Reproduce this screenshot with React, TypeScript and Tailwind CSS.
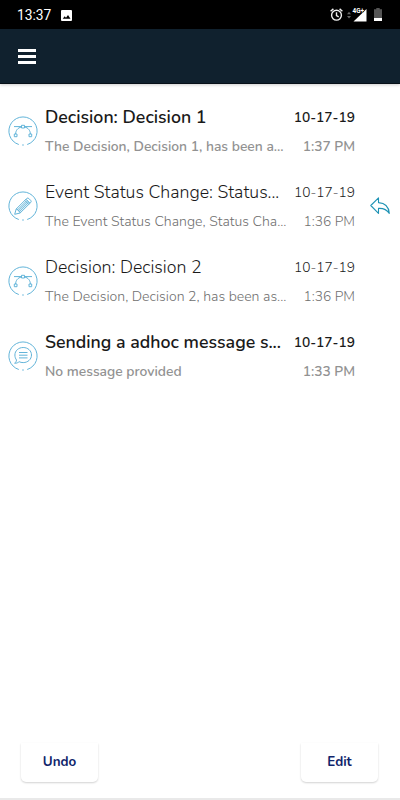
import React from "react";
import clsx from "clsx";

type IconKind = "decision" | "status" | "message";

type Notification = {
  id: number;
  kind: IconKind;
  title: string;
  body: string;
  date: string;
  time: string;
  unread: boolean;
  reply?: boolean;
};

const notifications: Notification[] = [
  {
    id: 1,
    kind: "decision",
    title: "Decision: Decision 1",
    body: "The Decision, Decision 1, has been a...",
    date: "10-17-19",
    time: "1:37 PM",
    unread: true,
  },
  {
    id: 2,
    kind: "status",
    title: "Event Status Change: Status...",
    body: "The Event Status Change, Status Cha...",
    date: "10-17-19",
    time: "1:36 PM",
    unread: false,
    reply: true,
  },
  {
    id: 3,
    kind: "decision",
    title: "Decision: Decision 2",
    body: "The Decision, Decision 2, has been as...",
    date: "10-17-19",
    time: "1:36 PM",
    unread: false,
  },
  {
    id: 4,
    kind: "message",
    title: "Sending a adhoc message s...",
    body: "No message provided",
    date: "10-17-19",
    time: "1:33 PM",
    unread: true,
  },
];

function StatusBar() {
  return (
    <div className="flex h-[29px] items-center bg-black pl-[17px] pr-[18px] text-white">
      <span className="pt-px font-['Roboto',sans-serif] text-[13.8px] leading-[28px]">
        13:37
      </span>
      <svg
        className="ml-[10px] mt-px"
        width="11"
        height="11"
        viewBox="0 0 11 11"
      >
        <rect width="11" height="11" rx="1" fill="#fff" />
        <path d="M1.7 8.8l2-2.5 1.3 1.5 2-2.7 2.5 3.7z" fill="#000" />
      </svg>
      <div className="ml-auto flex items-center">
        {/* Alarm */}
        <svg
          width="13"
          height="13"
          viewBox="0 0 13 13"
          fill="none"
          stroke="#f0f0f0"
          strokeWidth="1.4"
        >
          <circle cx="6.5" cy="7.2" r="4.9" />
          <path d="M6.5 4.2v3.3l2.2 1.3M.6 3.2L3.4.9M12.4 3.2L9.6.9" />
        </svg>
        {/* Mobile data */}
        <svg className="ml-[4px]" width="20" height="14" viewBox="0 0 20 14">
          <path d="M0 6.2l2-2.4 2 2.4zM0 8l2 2.4L4 8z" fill="#666" />
          <path d="M19.500 1v12.500H6.500z" fill="#fff" />
          <text
            x="5.6"
            y="5.4"
            fill="#fff"
            stroke="#000"
            strokeWidth="0.8"
            paintOrder="stroke"
            fontSize="6.4"
            fontWeight="700"
            fontFamily="Roboto, sans-serif"
          >
            4G+
          </text>
        </svg>
        {/* Battery */}
        <svg className="ml-[7px]" width="8" height="13" viewBox="0 0 8 13">
          <path d="M2.3 0h3.4v1.3H8V10H0V1.3h2.3z" fill="#555" />
          <path d="M0 10h8v3H0z" fill="#fff" />
        </svg>
      </div>
    </div>
  );
}

function Header() {
  return (
    <header className="flex h-[55px] items-center border-b border-[#071018] bg-[#10212e] pl-[18px] shadow-[0_1px_3px_rgba(0,0,0,0.2)]">
      <button aria-label="Menu" className="flex flex-col gap-[3px] pt-px">
        <span className="h-[3.500px] w-[18px] bg-white" />
        <span className="h-[3px] w-[18px] bg-white" />
        <span className="h-[3px] w-[18px] bg-white" />
      </button>
    </header>
  );
}

function KindIcon({ kind }: { kind: IconKind }) {
  return (
    <svg
      className="shrink-0"
      width="30"
      height="30"
      viewBox="0 0 30 30"
      fill="none"
      stroke="#62b4d9"
      strokeWidth="1"
    >
      {/* Ring with the gaps at the bottom */}
      <path d="M10.800 28.500A14.1 14.1 0 1 1 19.200 28.500M14.2 29h1.600" />
      {kind === "decision" && (
        <>
          <path d="M6 10.6h7.500M16.500 10.600H24M13.500 11C9.500 11.800 7.700 14.800 7.600 18M16.500 11c4 .8 5.800 3.800 5.900 7" />
          <path d="M13.500 9.300h3v2.700h-3zM6.300 18h2.700v2.700H6.300zM21 18h2.700v2.700H21z" />
        </>
      )}
      {kind === "status" && (
        <>
          <path d="M6.700 23.300l1.500-5.300L18.800 7.400q1-.8 2 .1l1.900 1.900q.9 1 .1 2L12.100 22z" />
          <path d="M8.200 18l1.700.5.4 1.500 1.500.4.300 1.600M9.900 18.500L19 9.400M11.800 20.400L21 11.200M10.300 20l9.700-9.700M16.800 9.400l3.900 3.900M18 8.200l3.900 3.900" />
        </>
      )}
      {kind === "message" && (
        <>
          <path d="M15.200 6.500c4.700 0 8.300 3.300 8.300 7.500s-3.600 7.600-8.300 7.600c-1.500 0-2.900-.3-4.100-.9-1 1-2.500 1.600-4.500 1.500 1.200-.8 1.800-1.800 1.900-3.200-1-1.300-1.600-3-1.600-5 0-4.200 3.600-7.500 8.300-7.500z" />
          <path d="M11 11.500h8.500M11 14.200h8.500M11 16.900h8.500" />
        </>
      )}
    </svg>
  );
}

function ReplyIcon() {
  return (
    <svg
      width="20"
      height="18"
      viewBox="0 0 20 18"
      fill="none"
      stroke="#1f93b5"
      strokeWidth="1.1"
      strokeLinejoin="round"
    >
      <path d="M8.500.8L.8 8.500l7.700 7.900v-5c4.500-.3 8 .8 10.800 5C18.800 9.800 15 6 8.500 5.600z" />
    </svg>
  );
}

function NotificationRow({ item }: { item: Notification }) {
  return (
    <li className="flex h-[75px] items-start pl-2">
      <div className="pt-[22px]">
        <KindIcon kind={item.kind} />
      </div>
      <div className="ml-[7px] w-[245px] whitespace-nowrap pt-3">
        <p
          className={clsx(
            "text-[17.75px] leading-[22px] text-[#1a1a1a]",
            item.unread ? "font-semibold" : "font-light"
          )}
        >
          {item.title}
        </p>
        <p
          className={clsx(
            "mt-2 leading-[22px]",
            item.unread
              ? "text-[13.85px] font-semibold text-[#929292]"
              : "text-[14.08px] font-light text-[#707070]"
          )}
        >
          {item.body}
        </p>
      </div>
      <div
        className={clsx(
          "w-[65px] whitespace-nowrap pt-3 text-right text-[13.75px]",
          item.unread ? "font-semibold" : "font-light"
        )}
      >
        <p className="leading-6 text-[#1a1a1a]">{item.date}</p>
        <p
          className={clsx(
            "mt-[6px] leading-[22px]",
            item.unread ? "text-[#929292]" : "text-[#707070]"
          )}
        >
          {item.time}
        </p>
      </div>
      {item.reply && (
        <div className="ml-[15px] pt-[28px]">
          <ReplyIcon />
        </div>
      )}
    </li>
  );
}

function FooterButton({ label }: { label: string }) {
  return (
    <button className="h-[39px] w-[77px] rounded-b-[5px] bg-white pb-px text-[13.4px] font-bold text-[#10256b] shadow-[0_1px_2px_rgba(0,0,0,0.18)]">
      {label}
    </button>
  );
}

export default function App() {
  return (
    <div className="flex h-[800px] w-[400px] flex-col overflow-hidden bg-white font-['Nunito','Open_Sans',sans-serif]">
      <StatusBar />
      <Header />
      <ul className="flex-1 pt-[10px]">
        {notifications.map((item) => (
          <NotificationRow key={item.id} item={item} />
        ))}
      </ul>
      <footer className="flex justify-between border-b-2 border-[#e9e9e9] pb-4 pl-[21px] pr-[22px]">
        <FooterButton label="Undo" />
        <FooterButton label="Edit" />
      </footer>
    </div>
  );
}
